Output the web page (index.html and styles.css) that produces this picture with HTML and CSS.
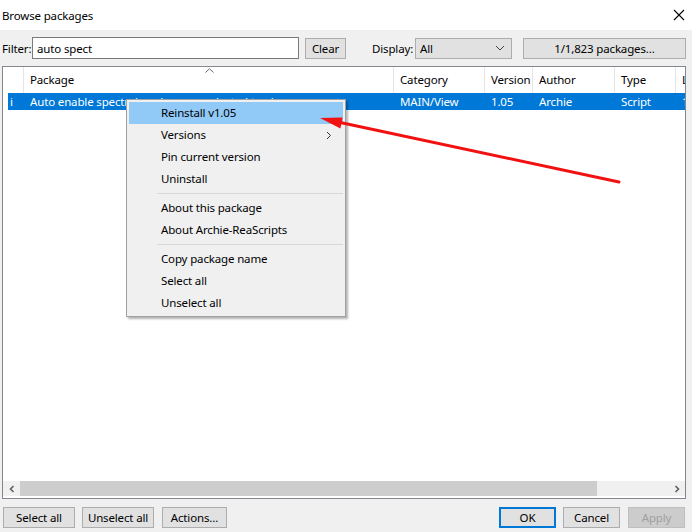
FILE: index.html
```html
<!DOCTYPE html>
<html>
<head>
<meta charset="utf-8">
<title>Browse packages</title>
<link rel="stylesheet" href="styles.css">
</head>
<body>
<div class="dlg">
	<div class="title_bar">
		<span class="title_text">Browse packages</span>
		<svg class="close_x" width="12" height="12" viewBox="0 0 12 12"><path d="M1 1L11 11M11 1L1 11" stroke="#000" stroke-width="1.1" fill="none"/></svg>
	</div>

	<div class="tool_row">
		<label class="lbl_filter">Filter:</label>
		<input class="txt_filter" type="text" value="auto spect">
		<button class="btn btn_clear" type="button">Clear</button>
		<label class="lbl_display">Display:</label>
		<div class="sel_display">
			<span>All</span>
			<svg class="sel_arrow" width="10" height="6" viewBox="0 0 10 6"><path d="M1 1L5 5L9 1" stroke="#444" stroke-width="1" fill="none"/></svg>
		</div>
		<button class="btn btn_count" type="button">1/1,823 packages…</button>
	</div>

	<div class="list_box">
		<div class="list_head">
			<div class="hcol c0"></div>
			<div class="hcol c1">Package
				<svg class="sort_caret" width="9" height="5" viewBox="0 0 9 5"><path d="M0.5 4.5L4.5 0.8L8.5 4.5" stroke="#666" stroke-width="1" fill="none"/></svg>
			</div>
			<div class="hcol c2">Category</div>
			<div class="hcol c3">Version</div>
			<div class="hcol c4">Author</div>
			<div class="hcol c5">Type</div>
			<div class="hcol c6">L</div>
		</div>
		<div class="list_body">
			<div class="row row_sel">
				<div class="cell c0">i</div>
				<div class="cell c1">Auto enable spectral analyzer on selected track</div>
				<div class="cell c2">MAIN/View</div>
				<div class="cell c3">1.05</div>
				<div class="cell c4">Archie</div>
				<div class="cell c5">Script</div>
				<div class="cell c6">1</div>
			</div>
		</div>
		<div class="hscroll">
			<div class="sb_btn"><svg width="8" height="8" viewBox="0 0 8 8"><path d="M5.5 1L2.5 4L5.5 7" stroke="#606060" stroke-width="1.6" fill="none"/></svg></div>
			<div class="sb_thumb"></div>
			<div class="sb_track"></div>
			<div class="sb_btn"><svg width="8" height="8" viewBox="0 0 8 8"><path d="M2.5 1L5.5 4L2.5 7" stroke="#606060" stroke-width="1.6" fill="none"/></svg></div>
		</div>
	</div>

	<div class="bottom_row">
		<button class="btn btn_sel" type="button">Select all</button>
		<button class="btn btn_unsel" type="button">Unselect all</button>
		<button class="btn btn_act" type="button">Actions…</button>
		<span class="spacer"></span>
		<button class="btn btn_ok" type="button">OK</button>
		<button class="btn btn_cancel" type="button">Cancel</button>
		<button class="btn btn_apply" type="button" disabled>Apply</button>
	</div>

	<div class="ctx_menu">
		<div class="mi mi_hot">Reinstall v1.05</div>
		<div class="mi">Versions<svg class="mi_sub" width="6" height="9" viewBox="0 0 6 9"><path d="M1 1L4.5 4.5L1 8" stroke="#333" stroke-width="1" fill="none"/></svg></div>
		<div class="mi">Pin current version</div>
		<div class="mi">Uninstall</div>
		<div class="mi_sep"></div>
		<div class="mi">About this package</div>
		<div class="mi">About Archie-ReaScripts</div>
		<div class="mi_sep"></div>
		<div class="mi">Copy package name</div>
		<div class="mi">Select all</div>
		<div class="mi">Unselect all</div>
	</div>

	<svg class="red_arrow" width="692" height="532" viewBox="0 0 692 532">
		<line x1="619" y1="182" x2="338" y2="122" stroke="#f21111" stroke-width="3" stroke-linecap="round"/>
		<polygon points="320,118 342.5,117.5 340.5,128.5" fill="#f21111"/>
	</svg>
</div>
</body>
</html>
```

FILE: styles.css
```css
html, body { margin:0; padding:0; }
body {
	font-family:"Noto Sans", "DejaVu Sans", sans-serif;
	font-size:11.5px;
	letter-spacing:-0.15px;
	color:#000;
	background:#f0f0f0;
}
.dlg {
	position:relative;
	width:692px;
	height:532px;
	overflow:hidden;
	background:#f0f0f0;
	display:flex;
	flex-direction:column;
}

/* title */
.title_bar {
	height:30px;
	background:#fff;
	display:flex;
	align-items:center;
	padding-left:2px;
	flex:none;
}
.title_text { flex:1; }
.close_x { margin-right:7px; }

/* filter row */
.tool_row {
	display:flex;
	align-items:center;
	height:22px;
	margin:7px 0 0 2px;
	flex:none;
}
.lbl_filter { width:30px; }
.txt_filter {
	width:267px;
	height:22px;
	box-sizing:border-box;
	border:1px solid #7a7a7a;
	background:#fff;
	font:inherit;
	letter-spacing:inherit;
	padding:0 4px;
	margin:0;
	outline:none;
}
.btn {
	box-sizing:border-box;
	height:21px;
	margin:0;
	padding:0;
	border:1px solid #adadad;
	background:#e1e1e1;
	font:inherit;
	letter-spacing:inherit;
	color:#000;
}
.btn_clear { width:41px; margin-left:6px; }
.lbl_display { width:43px; margin-left:26px; }
.sel_display {
	box-sizing:border-box;
	width:97px;
	height:21px;
	border:1px solid #adadad;
	background:#e1e1e1;
	display:flex;
	align-items:center;
	padding-left:4px;
}
.sel_display span { flex:1; }
.sel_arrow { margin-right:6px; }
.btn_count { width:163px; margin-left:11px; }

/* list */
.list_box {
	margin:7px 6px 0 2px;
	height:433px;
	box-sizing:border-box;
	border:1px solid #828790;
	background:#fff;
	display:flex;
	flex-direction:column;
	flex:none;
}
.list_head {
	display:flex;
	height:26px;
	flex:none;
}
.hcol {
	position:relative;
	box-sizing:border-box;
	border-right:1px solid #e5e5e5;
	padding-left:6px;
	line-height:26px;
	white-space:nowrap;
	overflow:hidden;
}
.c0 { width:21px; }
.c1 { width:370px; }
.c2 { width:91px; }
.c3 { width:48px; }
.c4 { width:82px; }
.c5 { width:61px; }
.c6 { flex:1; border-right:none; }
.sort_caret { position:absolute; left:181px; top:1px; }

.list_body { flex:1; }
.row {
	display:flex;
	height:17px;
	line-height:17px;
	margin-left:5px;
}
.row_sel { background:#0078d7; color:#fff; }
.cell { box-sizing:border-box; padding-left:6px; white-space:nowrap; overflow:hidden; }
.row .c0 { width:16px; padding-left:2px; }
.row .c1 { padding-left:6px; }

.hscroll {
	display:flex;
	height:15px;
	margin-bottom:2px;
	background:#f0f0f0;
	flex:none;
}
.sb_btn {
	width:17px;
	display:flex;
	align-items:center;
	justify-content:center;
}
.sb_thumb { width:577px; background:#cdcdcd; }
.sb_track { flex:1; }

/* buttons */
.bottom_row {
	display:flex;
	margin:8px 7px 0 3px;
	height:21px;
	flex:none;
}
.btn_sel, .btn_unsel { width:72px; }
.btn_unsel { margin-left:7px; }
.btn_act { width:65px; margin-left:8px; }
.spacer { flex:1; }
.btn_ok, .btn_cancel, .btn_apply { width:57px; }
.btn_ok { border:2px solid #0078d7; }
.btn_cancel { margin-left:7px; }
.btn_apply {
	margin-left:8px;
	background:#cccccc;
	border-color:#bfbfbf;
	color:#a0a0a0;
}

/* context menu */
.ctx_menu {
	position:absolute;
	left:126px;
	top:99px;
	width:220px;
	box-sizing:border-box;
	padding:2px;
	background:#f0f0f0;
	border:1px solid #a0a0a0;
	box-shadow:2px 2px 2px rgba(0,0,0,0.3);
}
.mi {
	position:relative;
	height:22px;
	line-height:22px;
	padding-left:32px;
}
.mi_hot { background:#91c9f7; }
.mi_sub { position:absolute; right:11px; top:7px; }
.mi_sep {
	height:1px;
	background:#d7d7d7;
	margin:3px 0 3px 28px;
}

.red_arrow { position:absolute; left:0; top:0; pointer-events:none; }
```
